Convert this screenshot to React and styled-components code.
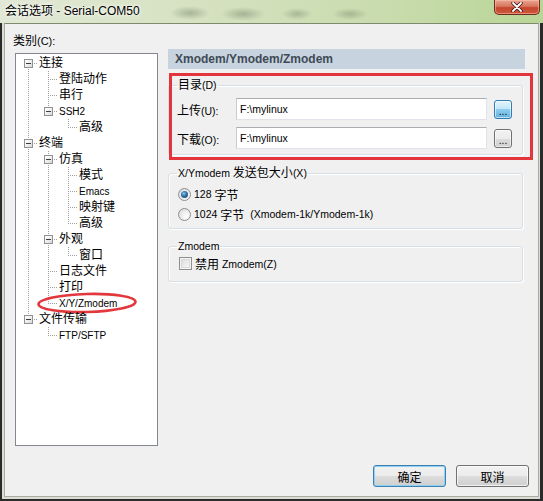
import React from "react";
import styled, { createGlobalStyle } from "styled-components";

const FONT = `"Liberation Sans", "Noto Sans CJK SC", sans-serif`;

const Global = createGlobalStyle`
  html, body { margin: 0; padding: 0; }
  body { width: 543px; height: 501px; overflow: hidden; font-family: ${FONT}; }
  * { box-sizing: border-box; }
`;

const Lat = styled.span`
  font-size: ${(p) => p.$size}px;
`;

const CJK = /([\u2E80-\u9FFF\uFF00-\uFFEF\u3000-\u303F]+)/;
function Txt({ children, lat = 10.5 }) {
  const parts = String(children).split(CJK);
  return parts.map((s, i) =>
    s === "" ? null : i % 2 === 1 ? (
      <React.Fragment key={i}>{s}</React.Fragment>
    ) : (
      <Lat key={i} $size={lat}>
        {s}
      </Lat>
    )
  );
}

/* ---------- window chrome ---------- */
const Window = styled.div`
  width: 543px;
  height: 501px;
  display: flex;
  flex-direction: column;
  font-family: ${FONT};
  overflow: hidden;
  background:
    radial-gradient(ellipse 20px 7px at 190px 13px, rgba(110, 125, 100, 0.45), transparent),
    radial-gradient(ellipse 22px 7px at 243px 14px, rgba(110, 125, 100, 0.45), transparent),
    radial-gradient(ellipse 15px 6px at 297px 14px, rgba(110, 125, 100, 0.4), transparent),
    radial-gradient(ellipse 18px 6px at 350px 14px, rgba(110, 125, 100, 0.4), transparent),
    linear-gradient(90deg, #e2e8d6 0%, #d6e2c2 35%, #c9dcae 70%, #b9d597 100%);
`;

const TitleBar = styled.div`
  height: 23px;
  flex: none;
  display: flex;
  justify-content: space-between;
  align-items: flex-start;
`;

const Title = styled.div`
  padding: 4px 0 0 5px;
  font-size: 12px;
  line-height: 15px;
  color: #000;
  text-shadow: 0 0 5px #fff, 0 0 3px #fff;
`;

const CloseBtn = styled.div`
  width: 46px;
  height: 15px;
  margin-right: 3px;
  display: flex;
  align-items: center;
  justify-content: center;
  border: 1px solid #6e2b1f;
  border-top: none;
  border-radius: 0 0 5px 5px;
  background: linear-gradient(#e9a591 0%, #d8765e 45%, #c4472d 55%, #d0573c 100%);
  box-shadow: inset 0 0 0 1px rgba(255, 200, 180, 0.5);
`;

const Frame = styled.div`
  flex: 1;
  display: flex;
  border-style: solid;
  border-color: #2a2a2a;
  border-width: 0 3px 2px 2px;
  padding: 0 1px 2px 2px;
  background: #d9ddd4;
`;

const Client = styled.div`
  flex: 1;
  display: flex;
  flex-direction: column;
  background: #f0f0f0;
  border: 1px solid #a9ada4;
  border-top-color: #7d8a6e;
  padding: 9px 8px 9px 8px;
`;

const Body = styled.div`
  display: flex;
  gap: 10px;
`;

/* ---------- tree ---------- */
const LeftCol = styled.div`
  width: 145px;
  flex: none;
  display: flex;
  flex-direction: column;
`;

const CatLabel = styled.div`
  font-size: 12px;
  line-height: 16px;
  color: #000;
  margin-bottom: 4px;
`;

const TreeBox = styled.div`
  margin-left: 2px;
  width: 143px;
  height: 393px;
  background: #fff;
  border: 1px solid #828790;
  padding: 1px 0 0 2px;
`;

const Row = styled.div`
  position: relative;
  display: flex;
  height: 16px;
  white-space: nowrap;
`;

const V = "repeating-linear-gradient(to bottom, #a0a0a0 0 1px, transparent 1px 2px)";
const H = "repeating-linear-gradient(to right, #a0a0a0 0 1px, transparent 1px 2px)";
const guideBg = {
  pipe: `${V} 10px 0 / 1px 16px no-repeat`,
  blank: "none",
  tee: `${V} 10px 0 / 1px 16px no-repeat, ${H} 10px 8px / 10px 1px no-repeat`,
  elbow: `${V} 10px 0 / 1px 9px no-repeat, ${H} 10px 8px / 10px 1px no-repeat`,
  first: `${V} 10px 8px / 1px 8px no-repeat, ${H} 10px 8px / 10px 1px no-repeat`,
};

const Guide = styled.span`
  width: 20px;
  height: 16px;
  flex: none;
  display: flex;
  align-items: flex-start;
  padding: 4px 0 0 6px;
  background: ${(p) => guideBg[p.$kind]};
`;

const Expander = styled.span`
  width: 9px;
  height: 9px;
  display: flex;
  align-items: center;
  justify-content: center;
  border: 1px solid #919191;
  background: linear-gradient(135deg, #ffffff 0%, #f0f0f0 50%, #d8d8d8 100%);
  &::after {
    content: "";
    width: 5px;
    height: 1px;
    background: #3c3c3c;
  }
`;

const NodeLabel = styled.span`
  padding-left: 1px;
  font-size: 12px;
  line-height: 16px;
  color: #000;
`;

const Ellipse = styled.svg`
  position: absolute;
  left: 19px;
  top: -3px;
  overflow: visible;
  pointer-events: none;
`;

const TREE = [
  {
    t: "连接",
    c: [{ t: "登陆动作" }, { t: "串行" }, { t: "SSH2", c: [{ t: "高级" }] }],
  },
  {
    t: "终端",
    c: [
      { t: "仿真", c: [{ t: "模式" }, { t: "Emacs" }, { t: "映射键" }, { t: "高级" }] },
      { t: "外观", c: [{ t: "窗口" }] },
      { t: "日志文件" },
      { t: "打印" },
      { t: "X/Y/Zmodem", mark: true },
    ],
  },
  { t: "文件传输", c: [{ t: "FTP/SFTP" }] },
];

function flatten(nodes, guides = [], out = [], root = true) {
  nodes.forEach((n, i) => {
    const last = i === nodes.length - 1;
    const kind = root && i === 0 ? "first" : last ? "elbow" : "tee";
    out.push({ t: n.t, mark: n.mark, guides, kind, expandable: !!n.c });
    if (n.c) flatten(n.c, [...guides, !last], out, false);
  });
  return out;
}

/* ---------- right panel ---------- */
const Panel = styled.div`
  position: relative;
  width: 357px;
  margin-top: 16px;
  display: flex;
  flex-direction: column;
`;

const Header = styled.div`
  height: 20px;
  line-height: 20px;
  padding-left: 7px;
  background: #c7d4e0;
  color: #3f4a55;
  font-size: 12px;
  font-weight: bold;
`;

const Group = styled.fieldset`
  width: 355px;
  margin: ${(p) => p.$mt}px 0 0 0;
  padding: ${(p) => p.$pad};
  border: 1px solid #d5dfe5;
  border-radius: 3px;
  box-shadow: inset 1px 1px 0 #fff, 1px 1px 0 #fff;
  min-inline-size: 0;
  display: flex;
  flex-direction: column;
  gap: ${(p) => p.$gap || 0}px;
`;

const Legend = styled.legend`
  padding: 0 1px;
  font-size: 12px;
  line-height: 16px;
  color: #000;
`;

const PathRow = styled.div`
  display: flex;
  align-items: center;
  height: 22px;
`;

const FieldLabel = styled.span`
  width: 59px;
  flex: none;
  font-size: 12px;
  color: #000;
`;

const Input = styled.input`
  width: 251px;
  height: 22px;
  margin: 0;
  padding: 0 0 0 3px;
  border: 1px solid #e2e3ea;
  border-top-color: #abadb3;
  border-left-color: #c9cbd2;
  background: #fff;
  font-family: ${FONT};
  font-size: 10.5px;
  color: #000;
  outline: none;
`;

const Browse = styled.button`
  width: 18px;
  height: 19px;
  margin-left: 7px;
  padding: 5px 0 0 0;
  font-family: ${FONT};
  font-size: 10px;
  line-height: 10px;
  color: #000;
  border-radius: 3px;
  border: 1px solid ${(p) => (p.$hot ? "#2f7db7" : "#707070")};
  background: ${(p) =>
    p.$hot
      ? "linear-gradient(#e3f4fc 0%, #c2e5f7 50%, #8fcdee 50%, #62b3de 100%)"
      : "linear-gradient(#f2f2f2 0%, #ebebeb 50%, #dddddd 50%, #cfcfcf 100%)"};
  box-shadow: inset 0 0 0 1px rgba(255, 255, 255, 0.6);
`;

const OptRow = styled.label`
  display: flex;
  align-items: center;
  height: ${(p) => p.$h}px;
  font-size: 12px;
  color: #000;
  white-space: pre;
`;

const Radio = styled.span`
  width: 13px;
  height: 13px;
  margin: 0 3px 0 1px;
  flex: none;
  border-radius: 50%;
  border: 1px solid #8e8f8f;
  display: flex;
  align-items: center;
  justify-content: center;
  background: radial-gradient(circle at 65% 65%, #ffffff 0%, #e9e9e9 55%, #cfcfcf 100%);
  &::after {
    content: "";
    width: 7px;
    height: 7px;
    border-radius: 50%;
    display: ${(p) => (p.$on ? "block" : "none")};
    background: radial-gradient(circle at 40% 35%, #8ec3ea 0%, #2f6fa4 45%, #163d63 100%);
  }
`;

const Check = styled.span`
  width: 13px;
  height: 13px;
  margin: 0 3px 0 2px;
  flex: none;
  border: 1px solid #8e8f8f;
  background: linear-gradient(135deg, #d6d6d6 0%, #eeeeee 60%, #fbfbfb 100%);
  box-shadow: inset 0 0 0 1px #f4f4f4, inset 0 0 0 2px #dadada;
`;

const RedBox = styled.div`
  position: absolute;
  left: 1px;
  top: 24px;
  width: 364px;
  height: 87px;
  border: 3px solid #e5353c;
  pointer-events: none;
`;

/* ---------- footer ---------- */
const Footer = styled.div`
  margin-top: auto;
  display: flex;
  justify-content: flex-end;
  gap: 10px;
  padding-right: 1px;
`;

const DlgButton = styled.button`
  width: 73px;
  height: 22px;
  padding: 0;
  font-family: ${FONT};
  font-size: 12px;
  color: #000;
  border-radius: 3px;
  border: 1px solid ${(p) => (p.$default ? "#3c7fb1" : "#707070")};
  background: linear-gradient(#f2f2f2 0%, #ebebeb 50%, #dddddd 50%, #cfcfcf 100%);
  box-shadow: ${(p) =>
    p.$default ? "inset 0 0 0 1px #8fd0f3" : "inset 0 0 0 1px rgba(255,255,255,0.7)"};
`;

export default function App() {
  const rows = flatten(TREE);
  return (
    <>
      <Global />
      <Window>
        <TitleBar>
          <Title>会话选项 - Serial-COM50</Title>
          <CloseBtn>
            <svg width="12" height="10" viewBox="0 0 12 10">
              <path d="M2 1 L10 9 M10 1 L2 9" stroke="#3b1710" strokeWidth="3.4" strokeLinecap="round" />
              <path d="M2 1 L10 9 M10 1 L2 9" stroke="#ffffff" strokeWidth="1.8" strokeLinecap="round" />
            </svg>
          </CloseBtn>
        </TitleBar>
        <Frame>
          <Client>
            <Body>
              <LeftCol>
                <CatLabel>
                  <Txt lat={11}>类别(C):</Txt>
                </CatLabel>
                <TreeBox>
                  {rows.map((r, i) => (
                    <Row key={i}>
                      {r.guides.map((g, j) => (
                        <Guide key={j} $kind={g ? "pipe" : "blank"} />
                      ))}
                      <Guide $kind={r.kind}>{r.expandable && <Expander />}</Guide>
                      <NodeLabel>
                        <Txt lat={10}>{r.t}</Txt>
                      </NodeLabel>
                      {r.mark && (
                        <Ellipse width="100" height="22" viewBox="0 0 100 22">
                          <ellipse
                            cx="50"
                            cy="11"
                            rx="48.5"
                            ry="9"
                            fill="none"
                            stroke="#e2383d"
                            strokeWidth="2.6"
                            transform="rotate(-1.5 50 11)"
                          />
                        </Ellipse>
                      )}
                    </Row>
                  ))}
                </TreeBox>
              </LeftCol>
              <Panel>
                <Header>Xmodem/Ymodem/Zmodem</Header>
                <Group $mt={8} $pad="5px 8px 5px 8px" $gap={7}>
                  <Legend>
                    <Txt>目录(D)</Txt>
                  </Legend>
                  <PathRow>
                    <FieldLabel>
                      <Txt>上传(U):</Txt>
                    </FieldLabel>
                    <Input readOnly value="F:\mylinux" />
                    <Browse $hot>...</Browse>
                  </PathRow>
                  <PathRow>
                    <FieldLabel>
                      <Txt>下载(O):</Txt>
                    </FieldLabel>
                    <Input readOnly value="F:\mylinux" />
                    <Browse>...</Browse>
                  </PathRow>
                </Group>
                <Group $mt={10} $pad="3px 8px 4px 8px">
                  <Legend>
                    <Txt>X/Ymodem 发送包大小(X)</Txt>
                  </Legend>
                  <OptRow $h={20}>
                    <Radio $on />
                    <Txt>128 字节</Txt>
                  </OptRow>
                  <OptRow $h={20}>
                    <Radio />
                    <Txt>1024 字节  (Xmodem-1k/Ymodem-1k)</Txt>
                  </OptRow>
                </Group>
                <Group $mt={9} $pad="0 8px 8px 8px">
                  <Legend>
                    <Txt>Zmodem</Txt>
                  </Legend>
                  <OptRow $h={19}>
                    <Check />
                    <Txt>禁用 Zmodem(Z)</Txt>
                  </OptRow>
                </Group>
                <RedBox />
              </Panel>
            </Body>
            <Footer>
              <DlgButton $default>确定</DlgButton>
              <DlgButton>取消</DlgButton>
            </Footer>
          </Client>
        </Frame>
      </Window>
    </>
  );
}
